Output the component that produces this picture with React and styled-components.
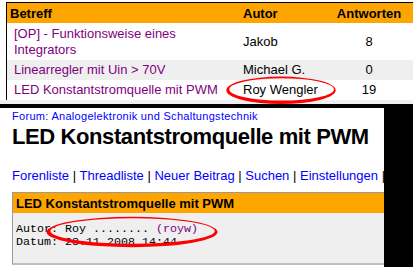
import React from 'react';
import styled, { createGlobalStyle } from 'styled-components';

const GlobalStyle = createGlobalStyle`
  html, body {
    margin: 0;
    padding: 0;
    background: #000;
  }
  body {
    font-family: "Liberation Sans", Arial, sans-serif;
  }
`;

const Frame = styled.div`
  position: relative;
  width: 413px;
  height: 267px;
  overflow: hidden;
  background: #000;
  display: flex;
  flex-direction: column;
  gap: 4px;
`;

const TopPanel = styled.div`
  background: #fff;
  padding: 2px 0 0 6px;
  display: flex;
  flex-direction: column;
`;

const Threads = styled.div`
  display: grid;
  grid-template-columns: 233px 90px 1fr;
  border-top: 1px solid #000;
  border-left: 1px solid #000;
  font-size: 13px;
`;

const HeadCell = styled.div`
  background: #ffa500;
  color: #000;
  font-weight: bold;
  height: 20px;
  display: flex;
  align-items: center;
  padding: 0 ${p => (p.$center ? '8px' : '3px')} 0 3px;
  justify-content: ${p => (p.$center ? 'center' : 'flex-start')};
`;

const Cell = styled.div`
  background: ${p => (p.$alt ? '#efefef' : '#fff')};
  color: #000;
  height: ${p => p.$h || 20}px;
  line-height: 16px;
  display: flex;
  align-items: center;
  padding: 0 ${p => (p.$center ? '8px' : '3px')} 0 ${p => (p.$indent ? '7px' : '3px')};
  justify-content: ${p => (p.$center ? 'center' : 'flex-start')};
`;

const Subject = styled.span`
  color: #800080;
`;

const Strip = styled.div`
  height: 4px;
  background: #efefef;
  margin-left: -6px;
`;

const Bottom = styled.div`
  flex: 1;
  width: 384px;
  background: #fff;
  overflow: hidden;
  padding: 2px 0 0 12px;
  box-sizing: border-box;
`;

const Crumb = styled.div`
  font-size: 11px;
  line-height: 13px;
  letter-spacing: 0.3px;
  color: #0000ff;
  white-space: nowrap;
`;

const Title = styled.h1`
  margin: 0;
  font-size: 22px;
  line-height: 28px;
  letter-spacing: -0.4px;
  font-weight: bold;
  color: #000;
  white-space: nowrap;
`;

const Nav = styled.div`
  margin-top: 17px;
  font-size: 13px;
  line-height: 16px;
  color: #000;
  white-space: nowrap;
`;

const NavLink = styled.span`
  color: #0000ff;
`;

const Post = styled.div`
  margin-top: 8px;
  width: 420px;
  border: 1px solid #999;
  border-bottom: 2px solid #c0c0c0;
  border-right: none;
`;

const PostHead = styled.div`
  background: #ffa500;
  height: 20px;
  display: flex;
  align-items: center;
  padding-left: 3px;
  font-size: 13px;
  font-weight: bold;
  color: #000;
`;

const PostBody = styled.div`
  background: #efefef;
  padding: 10px 0 14px 3px;
  font-family: "Liberation Mono", "Courier New", monospace;
  font-size: 11.67px;
  line-height: 13px;
  color: #000;
  white-space: pre;
`;

const User = styled.span`
  color: #800080;
`;

const Marks = styled.svg`
  position: absolute;
  left: 0;
  top: 0;
  pointer-events: none;
`;

function ring(cx, cy, rx, ry) {
  return `M${cx - rx} ${cy} a${rx} ${ry} 0 1 0 ${2 * rx} 0 a${rx} ${ry} 0 1 0 ${-2 * rx} 0Z`;
}

const threads = [
  { subject: <>[OP] - Funktionsweise eines<br />Integrators</>, author: 'Jakob', replies: 8, h: 37 },
  { subject: 'Linearregler mit Uin > 70V', author: 'Michael G.', replies: 0, alt: true },
  { subject: 'LED Konstantstromquelle mit PWM', author: 'Roy Wengler', replies: 19 },
];

const navItems = ['Forenliste', 'Threadliste', 'Neuer Beitrag', 'Suchen', 'Einstellungen'];

export default function App() {
  return (
    <>
      <GlobalStyle />
      <Frame>
        <TopPanel>
          <Threads>
            <HeadCell>Betreff</HeadCell>
            <HeadCell>Autor</HeadCell>
            <HeadCell $center>Antworten</HeadCell>
            {threads.map((t, i) => (
              <React.Fragment key={i}>
                <Cell $alt={t.alt} $h={t.h} $indent>
                  <Subject>{t.subject}</Subject>
                </Cell>
                <Cell $alt={t.alt} $h={t.h}>{t.author}</Cell>
                <Cell $alt={t.alt} $h={t.h} $center>{t.replies}</Cell>
              </React.Fragment>
            ))}
          </Threads>
          <Strip />
        </TopPanel>
        <Bottom>
          <Crumb>Forum: Analogelektronik und Schaltungstechnik</Crumb>
          <Title>LED Konstantstromquelle mit PWM</Title>
          <Nav>
            {navItems.map(item => (
              <React.Fragment key={item}>
                <NavLink>{item}</NavLink> |{' '}
              </React.Fragment>
            ))}
          </Nav>
          <Post>
            <PostHead>LED Konstantstromquelle mit PWM</PostHead>
            <PostBody>
              {'Autor: Roy ........ '}<User>(royw)</User>{'\nDatum: 28.11.2008 14:44'}
            </PostBody>
          </Post>
        </Bottom>
        <Marks width="413" height="267" viewBox="0 0 413 267">
          <path
            fill="#ff0000"
            fillRule="evenodd"
            d={ring(281, 90.3, 54.7, 13.7) + ring(281.6, 89.4, 52.3, 11.2)}
          />
          <path
            fill="#ff0000"
            fillRule="evenodd"
            d={ring(132, 232, 85.5, 15.2) + ring(132.6, 231, 82.2, 12.7)}
          />
        </Marks>
      </Frame>
    </>
  );
}
